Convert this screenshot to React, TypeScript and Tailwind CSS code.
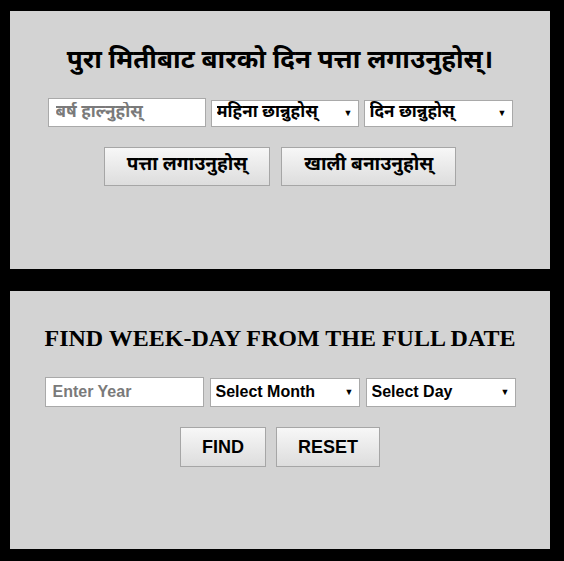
import React from "react";

const dev = '"Noto Sans Devanagari", "Lohit Devanagari", "Mangal", "Nirmala UI", sans-serif';
const arial = '"Liberation Sans", Arial, sans-serif';
const times = '"Liberation Serif", "Times New Roman", serif';

function Select({ label, w, h, font, size }: { label: string; w: string; h: string; font: string; size: string }) {
  return (
    <div className={`relative ${w} ${h}`}>
      <select
        className={`appearance-none w-full h-full bg-white border border-[#a9a9a9] pl-[5px] pr-5 font-bold text-black outline-none ${size}`}
        style={{ fontFamily: font }}
        defaultValue=""
      >
        <option value="">{label}</option>
      </select>
      <span
        className="pointer-events-none absolute right-[6px] top-1/2 -translate-y-1/2 text-[9px] leading-none text-black"
        style={{ fontFamily: arial }}
      >
        ▼
      </span>
    </div>
  );
}

function Btn({ children, font, cls }: { children: React.ReactNode; font: string; cls: string }) {
  return (
    <button
      className={`border border-[#a6a6a6] bg-linear-to-b from-[#f7f7f7] to-[#dddddd] font-bold text-black ${cls}`}
      style={{ fontFamily: font }}
    >
      {children}
    </button>
  );
}

export default function App() {
  return (
    <div className="min-h-screen bg-black pl-[10px] pr-[14px] pt-[11px]">
      <div className="h-[258px] bg-[#d3d3d3] flex flex-col items-center pt-[32px]">
        <h1 className="text-[26px] leading-[38px] font-bold text-black" style={{ fontFamily: dev }}>
          पुरा मितीबाट बारको दिन पत्ता लगाउनुहोस्।
        </h1>
        <div className="flex items-center gap-[5px] mt-[17px]">
          <input
            className="w-[158px] h-[29px] bg-white border border-[#a9a9a9] px-[7px] text-[17px] font-bold text-black placeholder:text-[#7a7a7a] outline-none"
            style={{ fontFamily: dev }}
            placeholder="बर्ष हाल्नुहोस्"
          />
          <Select label="महिना छान्नुहोस्" w="w-[148px]" h="h-[27px]" font={dev} size="text-[17px]" />
          <Select label="दिन छान्नुहोस्" w="w-[149px]" h="h-[27px]" font={dev} size="text-[17px]" />
        </div>
        <div className="flex gap-[11px] mt-[20px]">
          <Btn font={dev} cls="h-[39px] px-[22px] text-[19px]">पत्ता लगाउनुहोस्</Btn>
          <Btn font={dev} cls="h-[39px] px-[22px] text-[19px]">खाली बनाउनुहोस्</Btn>
        </div>
      </div>

      <div className="h-[258px] bg-[#d3d3d3] mt-[22px] flex flex-col items-center pt-[33px]">
        <h1 className="text-[24px] leading-[28px] font-bold text-black" style={{ fontFamily: times }}>
          FIND WEEK-DAY FROM THE FULL DATE
        </h1>
        <div className="flex items-center gap-[6px] mt-[25px]">
          <input
            className="w-[159px] h-[30px] bg-white border border-[#a9a9a9] px-[7px] text-[16px] font-bold text-black placeholder:text-[#7a7a7a] outline-none"
            style={{ fontFamily: arial }}
            placeholder="Enter Year"
          />
          <Select label="Select Month" w="w-[150px]" h="h-[29px]" font={arial} size="text-[16px]" />
          <Select label="Select Day" w="w-[150px]" h="h-[29px]" font={arial} size="text-[16px]" />
        </div>
        <div className="flex gap-[10px] mt-[20px]">
          <Btn font={arial} cls="h-[40px] px-[21px] text-[18px]">FIND</Btn>
          <Btn font={arial} cls="h-[40px] px-[21px] text-[18px]">RESET</Btn>
        </div>
      </div>
    </div>
  );
}
